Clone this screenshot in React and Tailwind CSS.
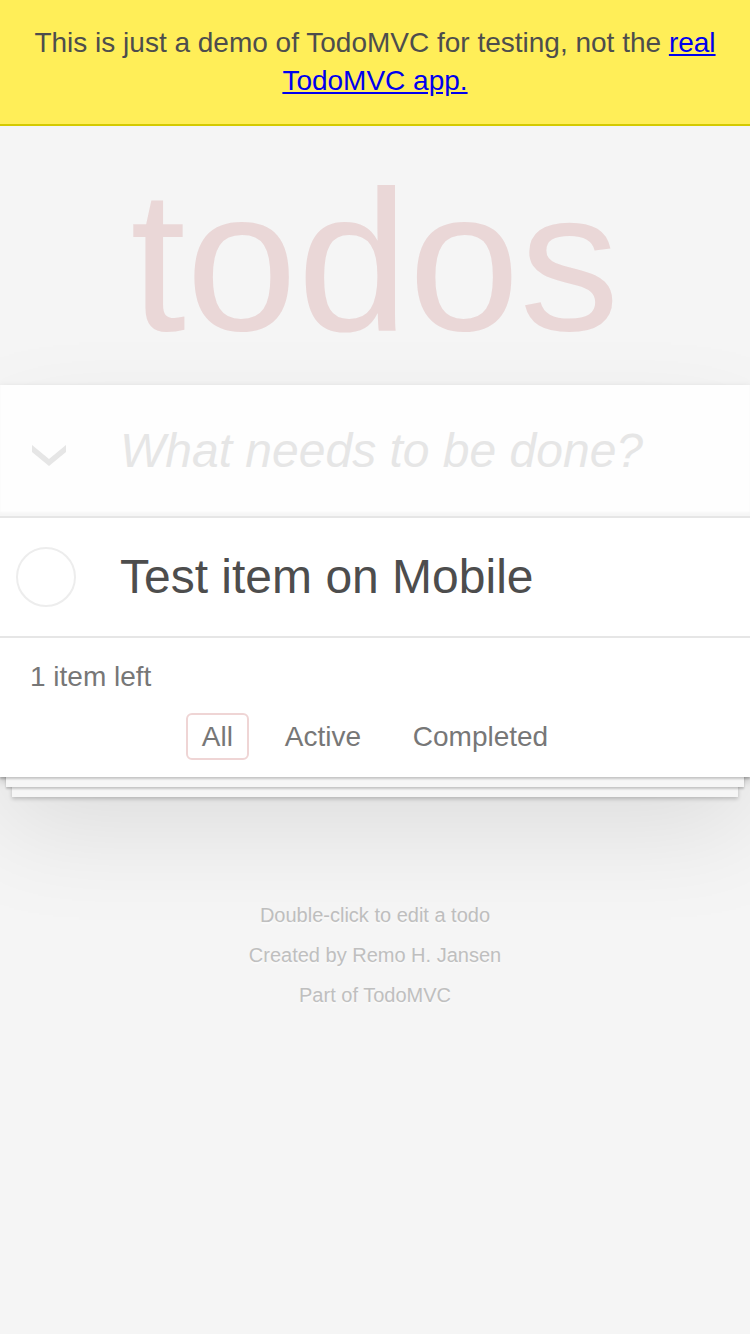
export default function App() {
    const filters = ['All', 'Active', 'Completed'];

    return (
        <div className="min-h-screen bg-[#f5f5f5] font-['Liberation_Sans',Arial,sans-serif] text-[#4d4d4d]">
            {/* Demo banner */}
            <div className="bg-[#ffee58] border-b-2 border-[#d4ca00] px-[20px] py-[24px] text-center text-[28px] leading-[38px]">
                This is just a demo of TodoMVC for testing, not the{' '}
                <a href="#" className="text-[#0000ee] underline">real TodoMVC app.</a>
            </div>

            {/* Title */}
            <h1 className="mt-[35px] mb-[24px] text-center text-[200px] leading-[200px] font-thin text-[rgba(175,47,47,0.15)]">
                todos
            </h1>

            {/* App */}
            <section className="relative bg-white shadow-[0_4px_8px_0_rgba(0,0,0,0.2),0_50px_100px_0_rgba(0,0,0,0.1)]">
                <header className="flex items-center h-[131px] bg-[rgba(0,0,0,0.003)] shadow-[inset_0_-4px_2px_rgba(0,0,0,0.03)]">
                    <div className="w-[120px] shrink-0 pl-[32px] mt-[10px]">
                        <svg width="34" height="21" viewBox="0 0 34 21">
                            <polygon points="0,0 17,14 34,0 34,7 17,21 0,7" fill="#e6e6e6" />
                        </svg>
                    </div>
                    <input
                        className="flex-1 min-w-0 h-full pr-[32px] bg-transparent outline-none text-[48px] leading-[67px] placeholder:italic placeholder:text-[#e6e6e6]"
                        placeholder="What needs to be done?"
                    />
                </header>

                <ul className="border-t-2 border-[#e6e6e6]">
                    <li className="flex items-center py-[29px]">
                        <svg className="ml-[16px] shrink-0" width="60" height="60" viewBox="0 0 60 60">
                            <circle cx="30" cy="30" r="29" fill="none" stroke="#ededed" strokeWidth="2" />
                        </svg>
                        <span className="ml-[44px] text-[48px] leading-[57.6px]">Test item on Mobile</span>
                    </li>
                </ul>

                {/* Footer */}
                <footer className="relative h-[141px] border-t-2 border-[#e6e6e6] px-[30px] pt-[19px] text-[#777] text-[28px] leading-[39.2px]">
                    <div className="absolute left-0 right-0 bottom-0 h-[100px] pointer-events-none shadow-[0_2px_2px_rgba(0,0,0,0.2),0_16px_0_-6px_#f6f6f6,0_18px_2px_-6px_rgba(0,0,0,0.2),0_32px_0_-12px_#f6f6f6,0_34px_4px_-12px_rgba(0,0,0,0.2)]" />
                    <span>1 item left</span>
                    <ul className="mt-[21px] h-[39.2px] flex items-center justify-center gap-[7.8px]">
                        {filters.map((f, i) => (
                            <li key={f}>
                                <a
                                    href="#"
                                    className={
                                        i === 0
                                            ? 'block mx-[6px] px-[14px] py-[6px] leading-[31px] border-2 rounded-[6px] border-[#efd5d5]'
                                            : 'block mx-[6px] px-[14px] py-[6px] leading-[31px] border-2 rounded-[6px] border-transparent'
                                    }
                                >
                                    {f}
                                </a>
                            </li>
                        ))}
                    </ul>
                </footer>
            </section>

            {/* Info */}
            <div className="mt-[128px] flex flex-col gap-[20px] text-center text-[20px] leading-[20px] text-[#bfbfbf] [text-shadow:0_2px_0_rgba(255,255,255,0.5)]">
                <p>Double-click to edit a todo</p>
                <p>Created by <a href="#">Remo H. Jansen</a></p>
                <p>Part of <a href="#">TodoMVC</a></p>
            </div>
        </div>
    );
}
